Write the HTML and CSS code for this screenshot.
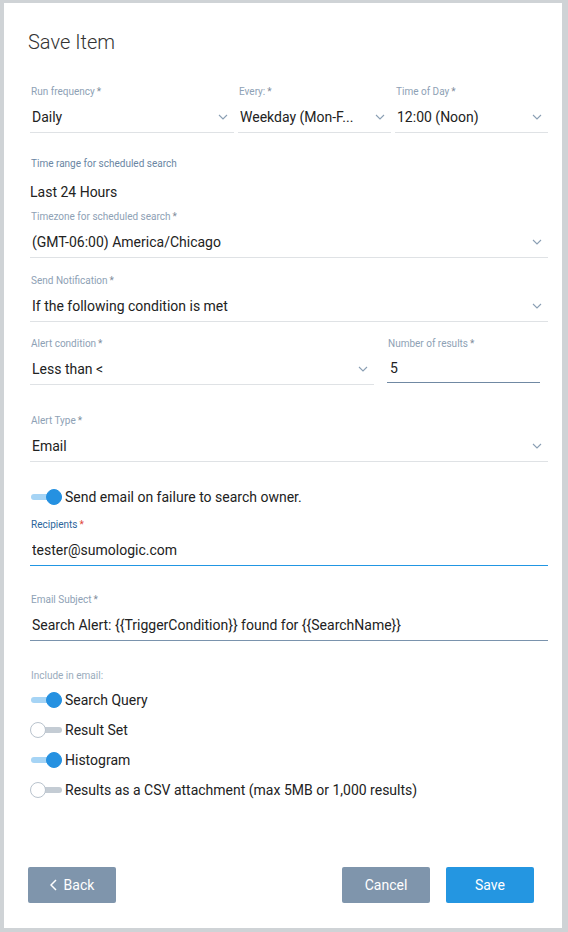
FILE: index.html
```html
<!DOCTYPE html>
<html>
<head>
<meta charset="utf-8">
<link rel="stylesheet" href="styles.css">
</head>
<body>
<div class="dialog">
  <h1 class="title">Save Item</h1>
  <div class="form">
    <div class="row row-3">
      <div class="field">
        <div class="label">Run frequency<span class="req">*</span></div>
        <div class="control select"><span class="val">Daily</span><svg class="chev" viewBox="0 0 10 6"><path d="M1 1l4 4 4-4"/></svg></div>
      </div>
      <div class="field">
        <div class="label">Every:<span class="req">*</span></div>
        <div class="control select"><span class="val">Weekday (Mon-F...</span><svg class="chev" viewBox="0 0 10 6"><path d="M1 1l4 4 4-4"/></svg></div>
      </div>
      <div class="field">
        <div class="label">Time of Day<span class="req">*</span></div>
        <div class="control select"><span class="val">12:00 (Noon)</span><svg class="chev" viewBox="0 0 10 6"><path d="M1 1l4 4 4-4"/></svg></div>
      </div>
    </div>

    <div class="field gap-24">
      <div class="label label-blue">Time range for scheduled search</div>
      <div class="control static">Last 24 Hours</div>
    </div>

    <div class="field gap-3">
      <div class="label">Timezone for scheduled search<span class="req">*</span></div>
      <div class="control select"><span class="val">(GMT-06:00) America/Chicago</span><svg class="chev" viewBox="0 0 10 6"><path d="M1 1l4 4 4-4"/></svg></div>
    </div>

    <div class="field gap-16">
      <div class="label">Send Notification<span class="req">*</span></div>
      <div class="control select"><span class="val">If the following condition is met</span><svg class="chev" viewBox="0 0 10 6"><path d="M1 1l4 4 4-4"/></svg></div>
    </div>

    <div class="row row-2 gap-15">
      <div class="field">
        <div class="label">Alert condition<span class="req">*</span></div>
        <div class="control select"><span class="val">Less than &lt;</span><svg class="chev" viewBox="0 0 10 6"><path d="M1 1l4 4 4-4"/></svg></div>
      </div>
      <div class="field">
        <div class="label">Number of results<span class="req">*</span></div>
        <div class="control input-num"><span class="val">5</span></div>
      </div>
    </div>

    <div class="field gap-29">
      <div class="label">Alert Type<span class="req">*</span></div>
      <div class="control select"><span class="val">Email</span><svg class="chev" viewBox="0 0 10 6"><path d="M1 1l4 4 4-4"/></svg></div>
    </div>

    <div class="toggle-row gap-25">
      <span class="toggle on"><span class="track"></span><span class="knob"></span></span>
      <span class="toggle-text">Send email on failure to search owner.</span>
    </div>

    <div class="field gap-11">
      <div class="label label-active">Recipients<span class="req req-red">*</span></div>
      <div class="control focused"><span class="val">tester@sumologic.com</span></div>
    </div>

    <div class="field gap-27">
      <div class="label">Email Subject<span class="req">*</span></div>
      <div class="control filled"><span class="val">Search Alert: {{TriggerCondition}} found for {{SearchName}}</span></div>
    </div>

    <div class="label label-light gap-28">Include in email:</div>
    <div class="toggles">
      <div class="toggle-row">
        <span class="toggle on"><span class="track"></span><span class="knob"></span></span>
        <span class="toggle-text">Search Query</span>
      </div>
      <div class="toggle-row">
        <span class="toggle"><span class="track"></span><span class="knob"></span></span>
        <span class="toggle-text">Result Set</span>
      </div>
      <div class="toggle-row">
        <span class="toggle on"><span class="track"></span><span class="knob"></span></span>
        <span class="toggle-text">Histogram</span>
      </div>
      <div class="toggle-row">
        <span class="toggle"><span class="track"></span><span class="knob"></span></span>
        <span class="toggle-text">Results as a CSV attachment (max 5MB or 1,000 results)</span>
      </div>
    </div>
  </div>

  <div class="footer">
    <button class="btn btn-gray"><svg class="back-chev" viewBox="0 0 7 12"><path d="M6 1L1 6l5 5"/></svg>Back</button>
    <div class="spacer"></div>
    <button class="btn btn-gray">Cancel</button>
    <button class="btn btn-blue">Save</button>
  </div>
</div>
</body>
</html>
```

FILE: styles.css
```css
* { box-sizing: border-box; }
html, body { margin: 0; padding: 0; }
body {
  background: #cfd3d6;
  font-family: Roboto, "Liberation Sans", Arial, sans-serif;
  color: #222;
  width: 568px;
  height: 932px;
  overflow: hidden;
}
.dialog {
  margin: 3px 6px 0 4px;
  width: 558px;
  height: 925px;
  background: #fff;
  display: flex;
  flex-direction: column;
  padding-top: 27px;
}
.title {
  margin: 0 0 0 24px;
  font-size: 20px;
  line-height: 24px;
  font-weight: 300;
  color: #333;
}
.form {
  margin-top: 31px;
  padding: 0 14px 0 26px;
  display: flex;
  flex-direction: column;
}
.row { display: grid; }
.row-3 { grid-template-columns: 204px 153px 153px; column-gap: 4px; }
.row-2 { grid-template-columns: 344px 153px; column-gap: 13px; }
.field { display: flex; flex-direction: column; }
.label {
  font-size: 10px;
  line-height: 14px;
  height: 14px;
  color: #8ea1b5;
  padding-left: 1px;
  white-space: nowrap;
}
.req { margin-left: 2px; color: #7f8d9b; }
.label-blue { color: #6a86a3; }
.label-active { color: #2b659b; }
.req-red { color: #e0453a; }
.label-light { color: #9aabbc; }
.control {
  margin-top: 3px;
  height: 31px;
  border-bottom: 1px solid #dfe2e5;
  display: flex;
  align-items: center;
  font-size: 14px;
  line-height: 30px;
  padding: 0 6px 0 2px;
  color: #222;
}
.control .val {
  flex: 1;
  white-space: nowrap;
  overflow: hidden;
}
.select .chev {
  width: 10px;
  height: 6px;
  fill: none;
  stroke: #8a9fb4;
  stroke-width: 1.1;
  flex: none;
}
.static {
  margin-top: 6px;
  border-bottom: none;
  height: 30px;
  padding-left: 0;
}
.input-num {
  height: 29px;
  border-bottom: 1px solid #7089a3;
  padding-left: 3px;
}
.focused { border-bottom: 1px solid #2196e3; }
.filled { border-bottom: 1px solid #7a93ad; }

.gap-3 { margin-top: 3px; }
.gap-11 { margin-top: 11px; }
.gap-15 { margin-top: 15px; }
.gap-16 { margin-top: 16px; }
.gap-24 { margin-top: 24px; }
.gap-25 { margin-top: 25px; }
.gap-27 { margin-top: 27px; }
.gap-28 { margin-top: 28px; }
.gap-29 { margin-top: 29px; }

.toggle-row {
  display: flex;
  align-items: center;
  height: 20px;
}
.toggles {
  margin-top: 7px;
  display: flex;
  flex-direction: column;
  gap: 10px;
}
.toggle {
  position: relative;
  width: 32px;
  height: 16px;
  flex: none;
  margin-right: 3px;
}
.toggle .track {
  position: absolute;
  left: 1px;
  right: 0;
  top: 5px;
  height: 6px;
  border-radius: 3px;
  background: #c4ccd4;
}
.toggle .knob {
  position: absolute;
  left: 0;
  top: 0;
  width: 16px;
  height: 16px;
  border-radius: 50%;
  background: #fff;
  border: 1px solid #b9c3cd;
}
.toggle.on .track { background: #a6d4f5; }
.toggle.on .knob {
  left: 16px;
  background: #2591e1;
  border-color: #2591e1;
}
.toggle-text {
  font-size: 14px;
  color: #222;
  white-space: nowrap;
}

.footer {
  margin-top: auto;
  padding: 0 28px 25px 24px;
  display: flex;
  align-items: center;
  gap: 16px;
}
.spacer { flex: 1; }
.btn {
  width: 88px;
  height: 36px;
  border: none;
  border-radius: 2px;
  color: #fff;
  font-family: Roboto, "Liberation Sans", Arial, sans-serif;
  font-size: 14px;
  display: flex;
  align-items: center;
  justify-content: center;
  padding: 0;
}
.btn-gray { background: #7f95ac; }
.btn-blue { background: #2496e1; }
.back-chev {
  width: 7px;
  height: 12px;
  fill: none;
  stroke: #fff;
  stroke-width: 1.5;
  margin-right: 7px;
}
```
